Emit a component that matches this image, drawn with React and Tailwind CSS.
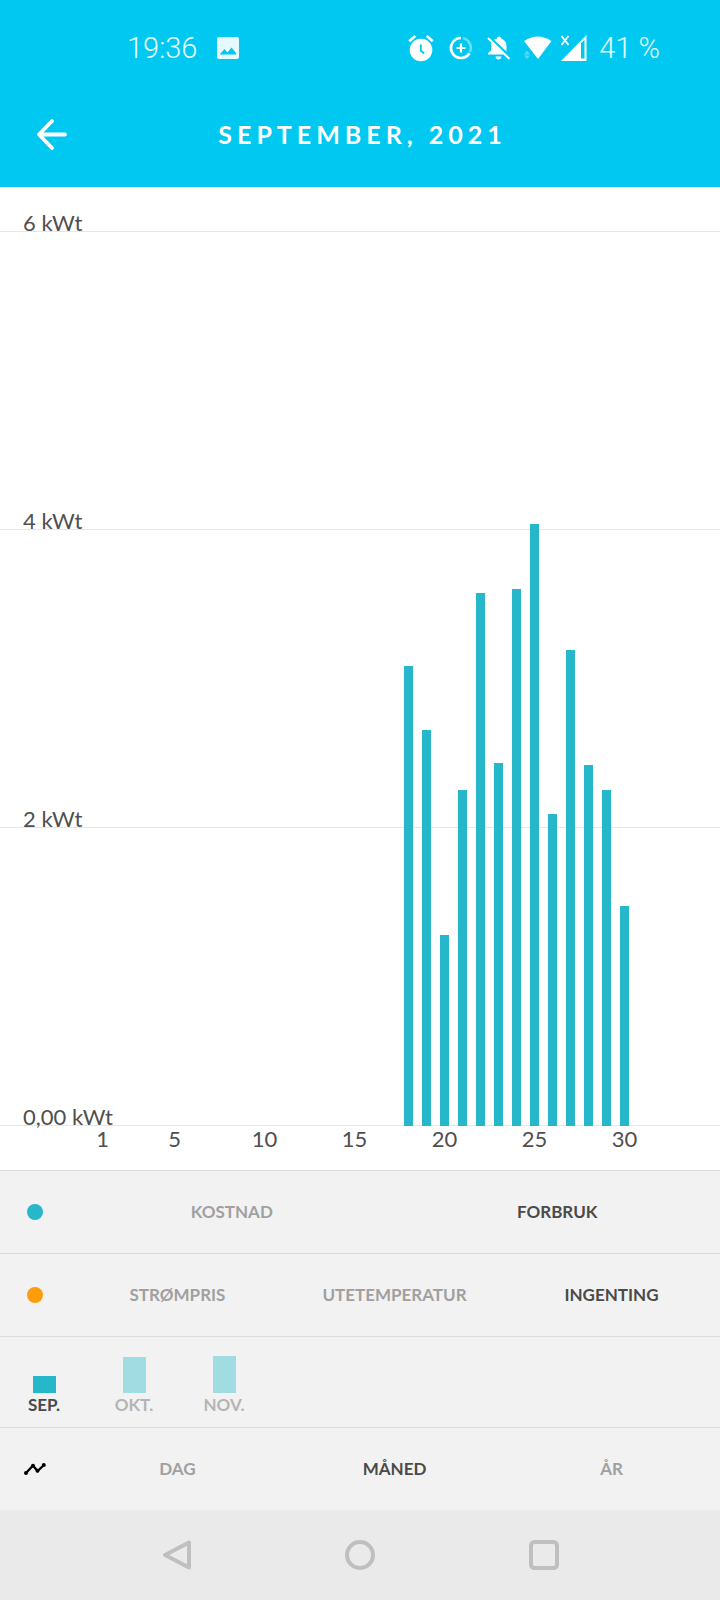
import React from "react";

const MAX = 6;
const days = Array.from({ length: 30 }, (_, i) => i + 1);
const usage = {
  18: 3.085, 19: 2.658, 20: 1.281, 21: 2.252, 22: 3.575, 23: 2.434, 24: 3.603,
  25: 4.043, 26: 2.094, 27: 3.193, 28: 2.421, 29: 2.257, 30: 1.479,
};
const dayLabels = [1, 5, 10, 15, 20, 25, 30];

function StatusBar() {
  return (
    <div className="flex h-24 items-center pl-[127px] pr-[60px] font-['Roboto',sans-serif] text-[29px] font-light text-white/90">
      <span className="leading-8">19:36</span>
      <svg className="ml-5 size-[22px]" viewBox="0 0 22 22" aria-hidden="true">
        <path fill="currentColor" fillRule="evenodd" d="M2 0H20Q22 0 22 2V20Q22 22 20 22H2Q0 22 0 20V2Q0 0 2 0ZM3 17.500H19V16L14.500 10.500L10.500 15.500L7.500 12L3 17Z" />
      </svg>
      <div className="ml-auto flex items-center text-white">
        <svg className="h-7 w-[26px]" viewBox="0 0 26 28" fill="none" aria-hidden="true">
          <circle cx="13" cy="16" r="11.300" fill="white" />
          <path d="M1.200 7.300L7.200 2M24.800 7.300L18.800 2" stroke="white" strokeWidth="2.600" />
          <path d="M12.800 10.500V16.500L16 19.500" stroke="#00c8f0" strokeWidth="1.900" />
        </svg>
        <svg className="ml-[15px] size-6" viewBox="0 0 24 24" fill="none" aria-hidden="true">
          <path d="M12 2A10 10 0 1 0 20.500 17.300" stroke="white" strokeWidth="2.700" />
          <path d="M14 2.200A10 10 0 0 1 21 16" stroke="white" strokeOpacity=".4" strokeWidth="2.700" />
          <path d="M12 7.500V16.500M7.500 12H16.500" stroke="white" strokeWidth="2.200" />
        </svg>
        <svg className="ml-3.5 size-6" viewBox="0 0 24 24" aria-hidden="true">
          <path fill="white" d="M7 3.800C7.900 3.100 8.900 2.700 10 2.500V2Q10 .5 12 .5T14 2V2.500C17.500 3.500 19.500 6 19.500 10V15.500ZM4.500 6.500L17 18.500H1V17L4 14.500V10C4 8.500 4.200 7.500 4.500 6.500ZM8.500 20.500H14.500Q14 23.500 11.500 23.500T8.500 20.500Z" />
          <path d="M1 2L22.500 23" stroke="white" strokeWidth="2" />
        </svg>
        <svg className="ml-3 h-6 w-[29px]" viewBox="0 0 29 24" aria-hidden="true">
          <path fill="white" d="M1 5Q15 -4 28.500 5L15 23Z" />
          <path fill="white" fillOpacity=".35" d="M1 18.500L4 14.500L7 18.500ZM1 19.500H7L4 23Z" />
        </svg>
        <svg className="ml-2 h-[26px] w-[27px]" viewBox="0 0 27 26" fill="none" aria-hidden="true">
          <path d="M1.500 1L8.500 10M8.500 1L1.500 10" stroke="white" strokeWidth="1.800" />
          <path fill="white" fillRule="evenodd" d="M26.500 0V26H1ZM21 8V23.500H24.500V5Z" />
        </svg>
        <span className="ml-3 leading-8 text-white/90">41 %</span>
      </div>
    </div>
  );
}

function Header() {
  return (
    <header className="bg-[#00c8f0] pb-[15px]">
      <StatusBar />
      <div className="grid h-[76px] grid-cols-[96px_1fr_96px] items-center">
        <button type="button" aria-label="Tilbake" className="flex h-full items-center pl-9 text-white">
          <svg className="size-8" viewBox="0 0 32 32" fill="none" stroke="currentColor" strokeWidth="3.800" strokeLinecap="round" strokeLinejoin="round" aria-hidden="true">
            <path d="M29 16.500H3M16 3L3 16.500L16 30" />
          </svg>
        </button>
        <h1 className="pl-[5px] text-center text-[25px] font-bold leading-8 tracking-[5px] text-white">SEPTEMBER, 2021</h1>
      </div>
    </header>
  );
}

function GridLine({ label, first }) {
  return (
    <div className={`flex items-end border-b border-[#e6e6e6] pl-[23px] ${first ? "h-[45px]" : "h-[298px]"}`}>
      <span className="leading-4">{label}</span>
    </div>
  );
}

function Chart() {
  return (
    <section className="bg-white text-[22px] text-[#4f4f4f]" aria-label="Forbruk per dag">
      <div className="grid">
        <div className="[grid-area:1/1]">
          <GridLine label="6 kWt" first />
          <GridLine label="4 kWt" />
          <GridLine label="2 kWt" />
          <GridLine label="0,00 kWt" />
        </div>
        <div className="grid items-end pl-[98px] pr-[82px] pt-[45px] [grid-area:1/1] [grid-template-columns:repeat(30,minmax(0,1fr))]">
          {days.map((d) => (
            <div key={d} className="flex h-full items-end">
              <div className="w-1/2 bg-[#27b7cb]" style={{ height: `${((usage[d] || 0) / MAX) * 100}%` }} />
            </div>
          ))}
        </div>
      </div>
      <div className="grid h-11 pl-[98px] pr-[82px] [grid-template-columns:repeat(30,minmax(0,1fr))]">
        {days.map((d) => (
          <div key={d} className="flex w-1/2 justify-center">
            {dayLabels.includes(d) && <span className="pt-[5px] leading-4">{d}</span>}
          </div>
        ))}
      </div>
    </section>
  );
}

function OptionRow({ icon, options, selected }) {
  return (
    <div className="flex h-[83px] items-stretch border-t border-[#dedede]">
      <div className="flex w-[69px] items-center justify-center">{icon}</div>
      <div className="flex flex-1">
        {options.map((o) => (
          <button
            key={o}
            type="button"
            aria-pressed={o === selected}
            className={`flex-1 basis-0 ${o === selected ? "text-[#4a4a4a]" : "text-[#a0a0a0]"}`}
          >
            {o}
          </button>
        ))}
      </div>
    </div>
  );
}

function Months() {
  const months = [
    { name: "SEP.", bar: "h-[17px] bg-[#27b7cb]", text: "text-[#4a4a4a]" },
    { name: "OKT.", bar: "h-9 bg-[#a1dce3]", text: "text-[#b4b4b4]" },
    { name: "NOV.", bar: "h-[37px] bg-[#a1dce3]", text: "text-[#b4b4b4]" },
  ];
  return (
    <div className="flex h-[91px] border-t border-[#dedede] pb-3">
      <div className="-ml-px flex">
        {months.map((m) => (
          <button key={m.name} type="button" className={`flex w-[90px] flex-col items-center justify-end ${m.text}`}>
            <span className={`w-[23px] ${m.bar}`} />
            <span className="pt-0.5 leading-5">{m.name}</span>
          </button>
        ))}
      </div>
    </div>
  );
}

function NavBar() {
  return (
    <nav className="grid h-[90px] grid-cols-[1fr_184px_184px_184px_1fr] items-center bg-[#eaeaea] text-[#bfbfbf]" aria-label="System">
      <button type="button" aria-label="Tilbake" className="col-start-2 flex justify-center">
        <svg className="h-8 w-[30px]" viewBox="0 0 30 32" fill="none" stroke="currentColor" strokeWidth="4" strokeLinejoin="round" aria-hidden="true">
          <path d="M28 3.500V28.500L4 16Z" />
        </svg>
      </button>
      <button type="button" aria-label="Hjem" className="flex justify-center">
        <svg className="size-[30px]" viewBox="0 0 30 30" fill="none" stroke="currentColor" strokeWidth="4" aria-hidden="true">
          <circle cx="15" cy="15" r="13" />
        </svg>
      </button>
      <button type="button" aria-label="Oversikt" className="flex justify-center">
        <svg className="size-[30px]" viewBox="0 0 30 30" fill="none" stroke="currentColor" strokeWidth="4" aria-hidden="true">
          <rect x="2" y="2" width="26" height="26" rx="3.500" />
        </svg>
      </button>
    </nav>
  );
}

export default function App() {
  return (
    <main className="min-h-screen bg-[#eaeaea] font-['Lato',sans-serif]">
      <Header />
      <Chart />
      <section className="bg-[#f2f2f2] text-[17px] font-bold" aria-label="Valg">
        <OptionRow icon={<span className="size-4 rounded-full bg-[#27b7cb]" />} options={["KOSTNAD", "FORBRUK"]} selected="FORBRUK" />
        <OptionRow icon={<span className="size-4 rounded-full bg-[#fd9d0b]" />} options={["STRØMPRIS", "UTETEMPERATUR", "INGENTING"]} selected="INGENTING" />
        <Months />
        <OptionRow
          icon={
            <svg className="h-3 w-[22px]" viewBox="0 0 22 12" aria-hidden="true">
              <path d="M2 10L9 2.500L13.500 8L20 2" fill="none" stroke="black" strokeWidth="2.300" />
              <circle cx="2" cy="10" r="2" />
              <circle cx="9" cy="2.800" r="2" />
              <circle cx="13.500" cy="7.800" r="2" />
              <circle cx="19.800" cy="2" r="2" />
            </svg>
          }
          options={["DAG", "MÅNED", "ÅR"]}
          selected="MÅNED"
        />
      </section>
      <NavBar />
    </main>
  );
}
